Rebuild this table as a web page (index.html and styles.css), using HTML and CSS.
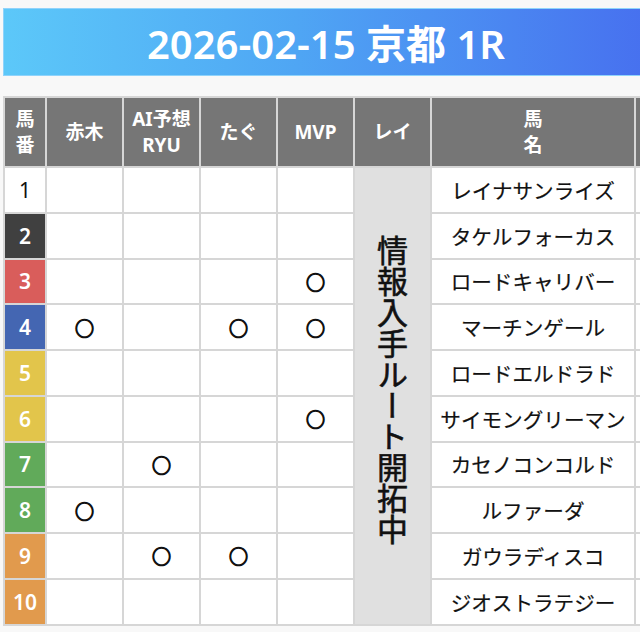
FILE: index.html
```html
<!DOCTYPE html>
<html lang="ja">
<head>
<meta charset="utf-8">
<title>2026-02-15 京都 1R</title>
<link rel="stylesheet" href="styles.css">
</head>
<body>
<div class="page">
  <h1 class="banner">2026-02-15 京都 1R</h1>
  <table class="race">
    <colgroup>
      <col class="c-num">
      <col class="c-mark">
      <col class="c-mark">
      <col class="c-mark">
      <col class="c-mark">
      <col class="c-mark">
      <col class="c-name">
      <col class="c-extra">
    </colgroup>
    <thead>
      <tr>
        <th>馬<br>番</th>
        <th>赤木</th>
        <th>AI予想<br>RYU</th>
        <th>たぐ</th>
        <th>MVP</th>
        <th>レイ</th>
        <th>馬<br>名</th>
        <th></th>
      </tr>
    </thead>
    <tbody>
      <tr>
        <td class="num w1">1</td><td></td><td></td><td></td><td></td>
        <td class="rei" rowspan="10"><span class="rei-text">情報入手ルート開拓中</span></td>
        <td class="name">レイナサンライズ</td><td></td>
      </tr>
      <tr>
        <td class="num w2">2</td><td></td><td></td><td></td><td></td>
        <td class="name">タケルフォーカス</td><td></td>
      </tr>
      <tr>
        <td class="num w3">3</td><td></td><td></td><td></td><td class="mark">○</td>
        <td class="name">ロードキャリバー</td><td></td>
      </tr>
      <tr>
        <td class="num w4">4</td><td class="mark">○</td><td></td><td class="mark">○</td><td class="mark">○</td>
        <td class="name">マーチンゲール</td><td></td>
      </tr>
      <tr>
        <td class="num w5">5</td><td></td><td></td><td></td><td></td>
        <td class="name">ロードエルドラド</td><td></td>
      </tr>
      <tr>
        <td class="num w6">6</td><td></td><td></td><td></td><td class="mark">○</td>
        <td class="name">サイモングリーマン</td><td></td>
      </tr>
      <tr>
        <td class="num w7">7</td><td></td><td class="mark">○</td><td></td><td></td>
        <td class="name">カセノコンコルド</td><td></td>
      </tr>
      <tr>
        <td class="num w8">8</td><td class="mark">○</td><td></td><td></td><td></td>
        <td class="name">ルファーダ</td><td></td>
      </tr>
      <tr>
        <td class="num w9">9</td><td></td><td class="mark">○</td><td class="mark">○</td><td></td>
        <td class="name">ガウラディスコ</td><td></td>
      </tr>
      <tr>
        <td class="num w10">10</td><td></td><td></td><td></td><td></td>
        <td class="name">ジオストラテジー</td><td></td>
      </tr>
    </tbody>
  </table>
</div>
</body>
</html>
```

FILE: styles.css
```css
html, body {
  margin: 0;
  padding: 0;
  overflow: hidden;
  background: #f8f8f8;
}

body {
  font-family: "Noto Sans", "Noto Sans CJK JP", sans-serif;
  color: #111;
}

.page {
  width: 760px;
  padding: 8px 0 0 3px;
}

.banner {
  box-sizing: border-box;
  width: 646px;
  height: 68px;
  margin: 0;
  display: flex;
  align-items: center;
  justify-content: center;
  background: linear-gradient(90deg, #5cc8f9 0%, #4fa6f4 45%, #4770ef 100%);
  border: 1px solid #8fd3fb;
  color: #fff;
  font-size: 40px;
  font-weight: 600;
  letter-spacing: 0;
}

.race {
  margin-top: 20px;
  table-layout: fixed;
  width: 735px;
  border-collapse: separate;
  border-spacing: 2px;
  background: #d6d6d6;
}

.c-num { width: 40px; }
.c-mark { width: 75px; }
.c-name { width: 202px; }
.c-extra { width: 100px; }

.race th,
.race td {
  padding: 0;
  text-align: center;
  vertical-align: middle;
}

.race th {
  height: 68px;
  background: #767676;
  color: #fff;
  font-size: 19px;
  font-weight: 700;
  line-height: 26px;
}

.race td {
  height: 43.75px;
  background: #fff;
}

.num {
  font-size: 21px;
  font-weight: 600;
  color: #fff;
}

.race .w1 { color: #111; background: #fff; font-weight: 400; }
.race .w2 { background: #404040; }
.race .w3 { background: #d95d5b; }
.race .w4 { background: #4466b2; }
.race .w5,
.race .w6 { background: #e2c54b; }
.race .w7,
.race .w8 { background: #61aa5a; }
.race .w9,
.race .w10 { background: #e19a4d; }

.mark {
  font-family: "Noto Sans CJK JP", sans-serif;
  font-size: 19px;
  font-weight: 400;
  color: #111;
  -webkit-text-stroke: 1.3px #111;
}

.name {
  font-family: "Noto Sans CJK JP", sans-serif;
  font-size: 20.6px;
  color: #111;
  -webkit-text-stroke: 0.2px #111;
}

.race .rei {
  background: #e0e0e0;
}

.rei-text {
  display: inline-block;
  writing-mode: vertical-rl;
  font-family: "Noto Sans CJK JP", sans-serif;
  font-size: 31px;
  font-weight: 400;
  line-height: 1;
  color: #111;
  -webkit-text-stroke: 0.6px #111;
  margin-bottom: 6px;
}
```
